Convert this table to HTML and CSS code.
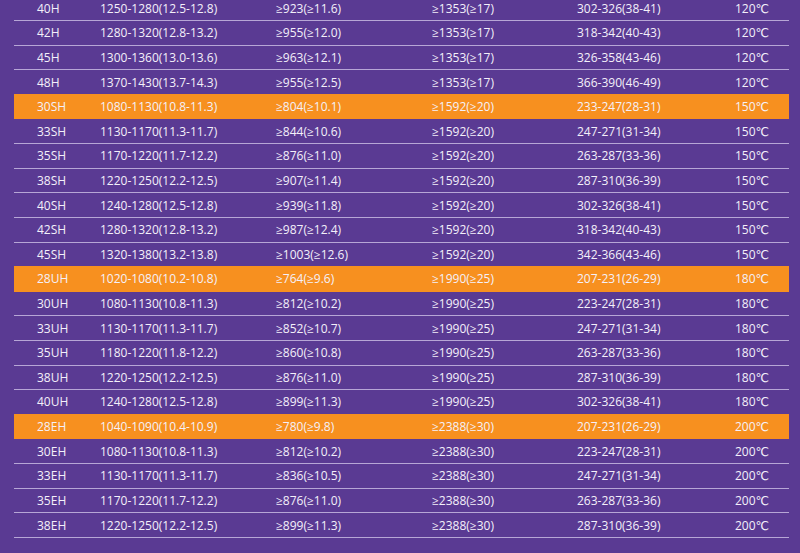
FILE: index.html
```html
<!DOCTYPE html>
<html lang="zh">
<head>
<meta charset="utf-8">
<title>Magnet grades</title>
<link rel="stylesheet" href="styles.css">
</head>
<body>
<div class="table">
  <div class="row"><span>40H</span><span>1250-1280(12.5-12.8)</span><span>≥923(≥11.6)</span><span>≥1353(≥17)</span><span>302-326(38-41)</span><span>120℃</span></div>
  <div class="row"><span>42H</span><span>1280-1320(12.8-13.2)</span><span>≥955(≥12.0)</span><span>≥1353(≥17)</span><span>318-342(40-43)</span><span>120℃</span></div>
  <div class="row"><span>45H</span><span>1300-1360(13.0-13.6)</span><span>≥963(≥12.1)</span><span>≥1353(≥17)</span><span>326-358(43-46)</span><span>120℃</span></div>
  <div class="row"><span>48H</span><span>1370-1430(13.7-14.3)</span><span>≥955(≥12.5)</span><span>≥1353(≥17)</span><span>366-390(46-49)</span><span>120℃</span></div>
  <div class="row hl"><span>30SH</span><span>1080-1130(10.8-11.3)</span><span>≥804(≥10.1)</span><span>≥1592(≥20)</span><span>233-247(28-31)</span><span>150℃</span></div>
  <div class="row"><span>33SH</span><span>1130-1170(11.3-11.7)</span><span>≥844(≥10.6)</span><span>≥1592(≥20)</span><span>247-271(31-34)</span><span>150℃</span></div>
  <div class="row"><span>35SH</span><span>1170-1220(11.7-12.2)</span><span>≥876(≥11.0)</span><span>≥1592(≥20)</span><span>263-287(33-36)</span><span>150℃</span></div>
  <div class="row"><span>38SH</span><span>1220-1250(12.2-12.5)</span><span>≥907(≥11.4)</span><span>≥1592(≥20)</span><span>287-310(36-39)</span><span>150℃</span></div>
  <div class="row"><span>40SH</span><span>1240-1280(12.5-12.8)</span><span>≥939(≥11.8)</span><span>≥1592(≥20)</span><span>302-326(38-41)</span><span>150℃</span></div>
  <div class="row"><span>42SH</span><span>1280-1320(12.8-13.2)</span><span>≥987(≥12.4)</span><span>≥1592(≥20)</span><span>318-342(40-43)</span><span>150℃</span></div>
  <div class="row"><span>45SH</span><span>1320-1380(13.2-13.8)</span><span>≥1003(≥12.6)</span><span>≥1592(≥20)</span><span>342-366(43-46)</span><span>150℃</span></div>
  <div class="row hl"><span>28UH</span><span>1020-1080(10.2-10.8)</span><span>≥764(≥9.6)</span><span>≥1990(≥25)</span><span>207-231(26-29)</span><span>180℃</span></div>
  <div class="row"><span>30UH</span><span>1080-1130(10.8-11.3)</span><span>≥812(≥10.2)</span><span>≥1990(≥25)</span><span>223-247(28-31)</span><span>180℃</span></div>
  <div class="row"><span>33UH</span><span>1130-1170(11.3-11.7)</span><span>≥852(≥10.7)</span><span>≥1990(≥25)</span><span>247-271(31-34)</span><span>180℃</span></div>
  <div class="row"><span>35UH</span><span>1180-1220(11.8-12.2)</span><span>≥860(≥10.8)</span><span>≥1990(≥25)</span><span>263-287(33-36)</span><span>180℃</span></div>
  <div class="row"><span>38UH</span><span>1220-1250(12.2-12.5)</span><span>≥876(≥11.0)</span><span>≥1990(≥25)</span><span>287-310(36-39)</span><span>180℃</span></div>
  <div class="row"><span>40UH</span><span>1240-1280(12.5-12.8)</span><span>≥899(≥11.3)</span><span>≥1990(≥25)</span><span>302-326(38-41)</span><span>180℃</span></div>
  <div class="row hl"><span>28EH</span><span>1040-1090(10.4-10.9)</span><span>≥780(≥9.8)</span><span>≥2388(≥30)</span><span>207-231(26-29)</span><span>200℃</span></div>
  <div class="row"><span>30EH</span><span>1080-1130(10.8-11.3)</span><span>≥812(≥10.2)</span><span>≥2388(≥30)</span><span>223-247(28-31)</span><span>200℃</span></div>
  <div class="row"><span>33EH</span><span>1130-1170(11.3-11.7)</span><span>≥836(≥10.5)</span><span>≥2388(≥30)</span><span>247-271(31-34)</span><span>200℃</span></div>
  <div class="row"><span>35EH</span><span>1170-1220(11.7-12.2)</span><span>≥876(≥11.0)</span><span>≥2388(≥30)</span><span>263-287(33-36)</span><span>200℃</span></div>
  <div class="row"><span>38EH</span><span>1220-1250(12.2-12.5)</span><span>≥899(≥11.3)</span><span>≥2388(≥30)</span><span>287-310(36-39)</span><span>200℃</span></div>
</div>
</body>
</html>
```
FILE: styles.css
```css
html, body {
  margin: 0;
  padding: 0;
  background: #5a3a93;
}
body {
  width: 800px;
  height: 553px;
  overflow: hidden;
  font-family: "Open Sans", "DejaVu Sans", sans-serif;
  font-size: 12px;
  color: #f4f0fa;
}
.table {
  margin: -3.6px 11px 0 14px;
  width: 775px;
}
.row {
  box-sizing: border-box;
  height: 24.62px;
  display: grid;
  grid-template-columns: 63px 176px 156px 145px 158px 1fr;
  align-items: center;
  padding-left: 23px;
  border-bottom: 1.6px solid #b7a6d6;
  white-space: nowrap;
}
.row:has(+ .hl) {
  border-bottom-color: #f7901f;
}
.row.hl {
  background: #f7901f;
  border-bottom-color: #f7901f;
}
.row > span {
  line-height: 1;
  padding-top: 1px;
}
```
